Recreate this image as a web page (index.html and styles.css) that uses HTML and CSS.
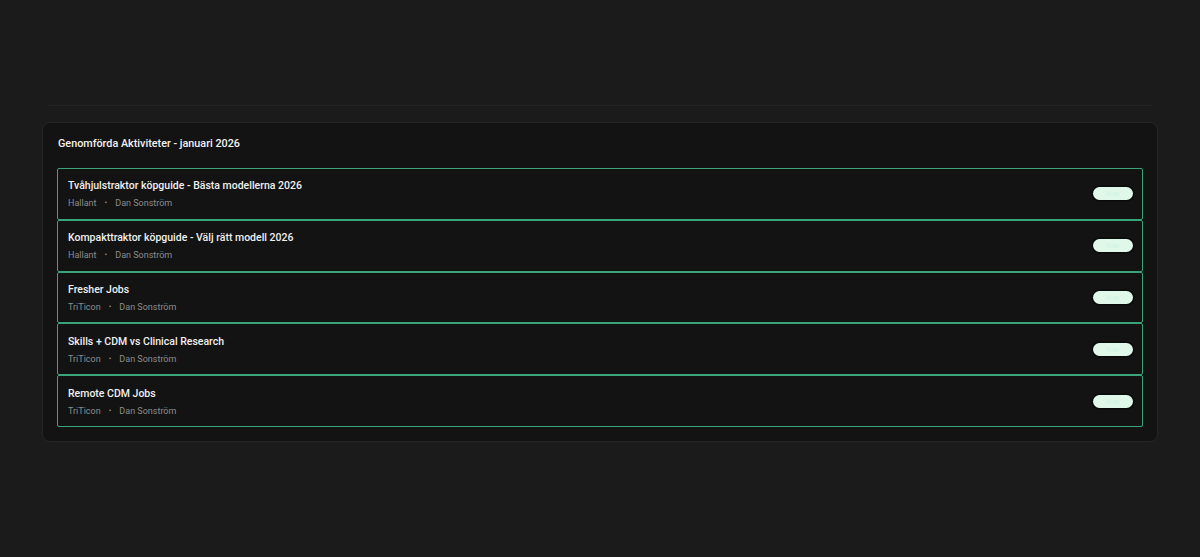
FILE: index.html
```html
<!DOCTYPE html>
<html lang="sv">
<head>
<meta charset="utf-8">
<link rel="stylesheet" href="styles.css">
</head>
<body>
<div class="page">
  <div class="divider"></div>
  <section class="card">
    <h2 class="card-title">Genomförda Aktiviteter - januari 2026</h2>
    <ul class="list">
      <li class="row">
        <div class="info">
          <div class="name">Tvåhjulstraktor köpguide - Bästa modellerna 2026</div>
          <div class="meta"><span>Hallant</span><span class="dot">•</span><span>Dan Sonström</span></div>
        </div>
        <span class="pill">Klar</span>
      </li>
      <li class="row">
        <div class="info">
          <div class="name">Kompakttraktor köpguide - Välj rätt modell 2026</div>
          <div class="meta"><span>Hallant</span><span class="dot">•</span><span>Dan Sonström</span></div>
        </div>
        <span class="pill">Klar</span>
      </li>
      <li class="row">
        <div class="info">
          <div class="name">Fresher Jobs</div>
          <div class="meta"><span>TriTicon</span><span class="dot">•</span><span>Dan Sonström</span></div>
        </div>
        <span class="pill">Klar</span>
      </li>
      <li class="row">
        <div class="info">
          <div class="name">Skills + CDM vs Clinical Research</div>
          <div class="meta"><span>TriTicon</span><span class="dot">•</span><span>Dan Sonström</span></div>
        </div>
        <span class="pill">Klar</span>
      </li>
      <li class="row">
        <div class="info">
          <div class="name">Remote CDM Jobs</div>
          <div class="meta"><span>TriTicon</span><span class="dot">•</span><span>Dan Sonström</span></div>
        </div>
        <span class="pill">Klar</span>
      </li>
    </ul>
  </section>
</div>
</body>
</html>
```
FILE: styles.css
```css
* { box-sizing: border-box; }
html, body { margin: 0; padding: 0; }
body {
  background: #1b1b1b;
  font-family: Roboto, "Noto Sans", sans-serif;
  color: #f2f2f2;
  height: 557px;
}
.page {
  padding: 105px 42px 0;
}
.divider {
  height: 1px;
  background: #232323;
  margin: 0 6px 16px;
}
.card {
  background: #131313;
  border: 1px solid #262626;
  border-radius: 8px;
  padding: 13px 14px 14px;
}
.card-title {
  margin: 0 0 16px 1px;
  font-size: 10.8px;
  line-height: 16px;
  font-weight: 500;
  color: #f2f2f2;
}
.list {
  list-style: none;
  margin: 0;
  padding: 0;
}
.row {
  display: flex;
  align-items: center;
  justify-content: space-between;
  height: 51.8px;
  border: 1px solid #3aa57b;
  border-radius: 2px;
  padding: 0 9px 0 10px;
}
.info {
  display: flex;
  flex-direction: column;
  gap: 4px;
}
.name {
  font-size: 10.5px;
  line-height: 14px;
  font-weight: 500;
  color: #f0f0f0;
  margin-top: 1px;
}
.meta {
  display: flex;
  align-items: center;
  gap: 8px;
  font-size: 9px;
  line-height: 12px;
  color: #8c8c8c;
}
.dot { font-size: 8px; color: #9a9a9a; }
.pill {
  width: 40px;
  height: 13px;
  border-radius: 7px;
  background: #dff8ea;
  box-shadow: 0 0 0 1.5px #0a0a0a;
  color: #d4f2e2;
  font-size: 8px;
  line-height: 13px;
  text-align: center;
}
```
